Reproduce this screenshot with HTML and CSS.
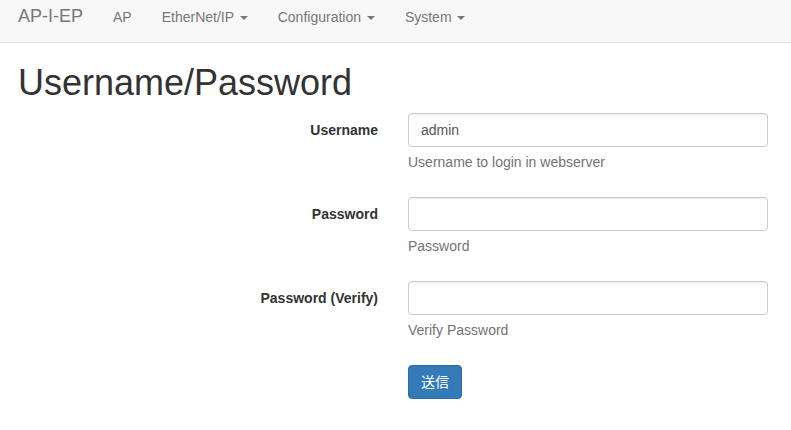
FILE: index.html
```html
<!DOCTYPE html>
<html lang="en">
<head>
    <meta charset="UTF-8">
    <meta name="viewport" content="width=device-width, initial-scale=1.0">
    <title>Username/Password</title>
    <link rel="stylesheet" href="styles.css">
</head>
<body>
    <nav class="navbar">
        <a class="brand" href="#">AP-I-EP</a>
        <ul class="nav">
            <li><a href="#">AP</a></li>
            <li><a href="#">EtherNet/IP <span class="caret"></span></a></li>
            <li><a href="#">Configuration <span class="caret"></span></a></li>
            <li><a href="#">System <span class="caret"></span></a></li>
        </ul>
    </nav>
    <div class="container">
        <h1>Username/Password</h1>
        <form class="form_horizontal">
            <div class="form_group">
                <label class="control_label" for="user">Username</label>
                <div class="control_col">
                    <input type="text" id="user" class="form_control" value="admin">
                    <span class="help_block">Username to login in webserver</span>
                </div>
            </div>
            <div class="form_group">
                <label class="control_label" for="pass">Password</label>
                <div class="control_col">
                    <input type="password" id="pass" class="form_control">
                    <span class="help_block">Password</span>
                </div>
            </div>
            <div class="form_group">
                <label class="control_label" for="pass2">Password (Verify)</label>
                <div class="control_col">
                    <input type="password" id="pass2" class="form_control">
                    <span class="help_block">Verify Password</span>
                </div>
            </div>
            <div class="form_group">
                <div class="control_label"></div>
                <div class="control_col">
                    <button type="button" class="btn_primary">送信</button>
                </div>
            </div>
        </form>
    </div>
</body>
</html>
```

FILE: styles.css
```css
* {
    box-sizing: border-box;
}
body {
    margin: 0;
    font-family: "Liberation Sans", "Noto Sans CJK JP", Arial, sans-serif;
    font-size: 14px;
    line-height: 20px;
    color: #333;
    background: #fff;
}
.navbar {
    display: flex;
    height: 43px;
    background-color: #f8f8f8;
    border-bottom: 1px solid #e7e7e7;
}
.brand {
    padding: 6px 15px 0 18px;
    font-size: 18px;
    line-height: 20px;
    color: #777;
    text-decoration: none;
}
.nav {
    display: flex;
    list-style: none;
    margin: 0;
    padding: 0;
}
.nav a {
    display: block;
    padding: 7px 15px 0;
    line-height: 20px;
    color: #777;
    text-decoration: none;
}
.caret {
    display: inline-block;
    width: 0;
    height: 0;
    margin-left: 2px;
    vertical-align: middle;
    border-top: 4px solid;
    border-right: 4px solid transparent;
    border-left: 4px solid transparent;
}
.container {
    padding: 0 15px;
}
h1 {
    margin: 20px 0 10px;
    padding-left: 3px;
    font-size: 36px;
    font-weight: 500;
    line-height: 1.1;
}
.form_horizontal {
    margin: 0 -15px;
}
.form_group {
    display: flex;
    margin-bottom: 15px;
}
.control_label {
    width: 393px;
    padding: 7px 15px 0;
    text-align: right;
    font-weight: bold;
}
.control_col {
    width: 390px;
    padding: 0 15px;
}
.form_control {
    display: block;
    width: 100%;
    height: 34px;
    padding: 6px 12px;
    font-family: inherit;
    font-size: 14px;
    line-height: 20px;
    color: #555;
    background: #fff;
    border: 1px solid #ccc;
    border-radius: 4px;
    box-shadow: inset 0 1px 1px rgba(0, 0, 0, .075);
}
.help_block {
    display: block;
    margin: 5px 0 10px;
    color: #737373;
}
.btn_primary {
    height: 34px;
    padding: 6px 12px;
    font-family: "Liberation Sans", "Noto Sans CJK JP", sans-serif;
    font-size: 14px;
    line-height: 20px;
    color: #fff;
    background-color: #337ab7;
    border: 1px solid #2e6da4;
    border-radius: 4px;
}
```
